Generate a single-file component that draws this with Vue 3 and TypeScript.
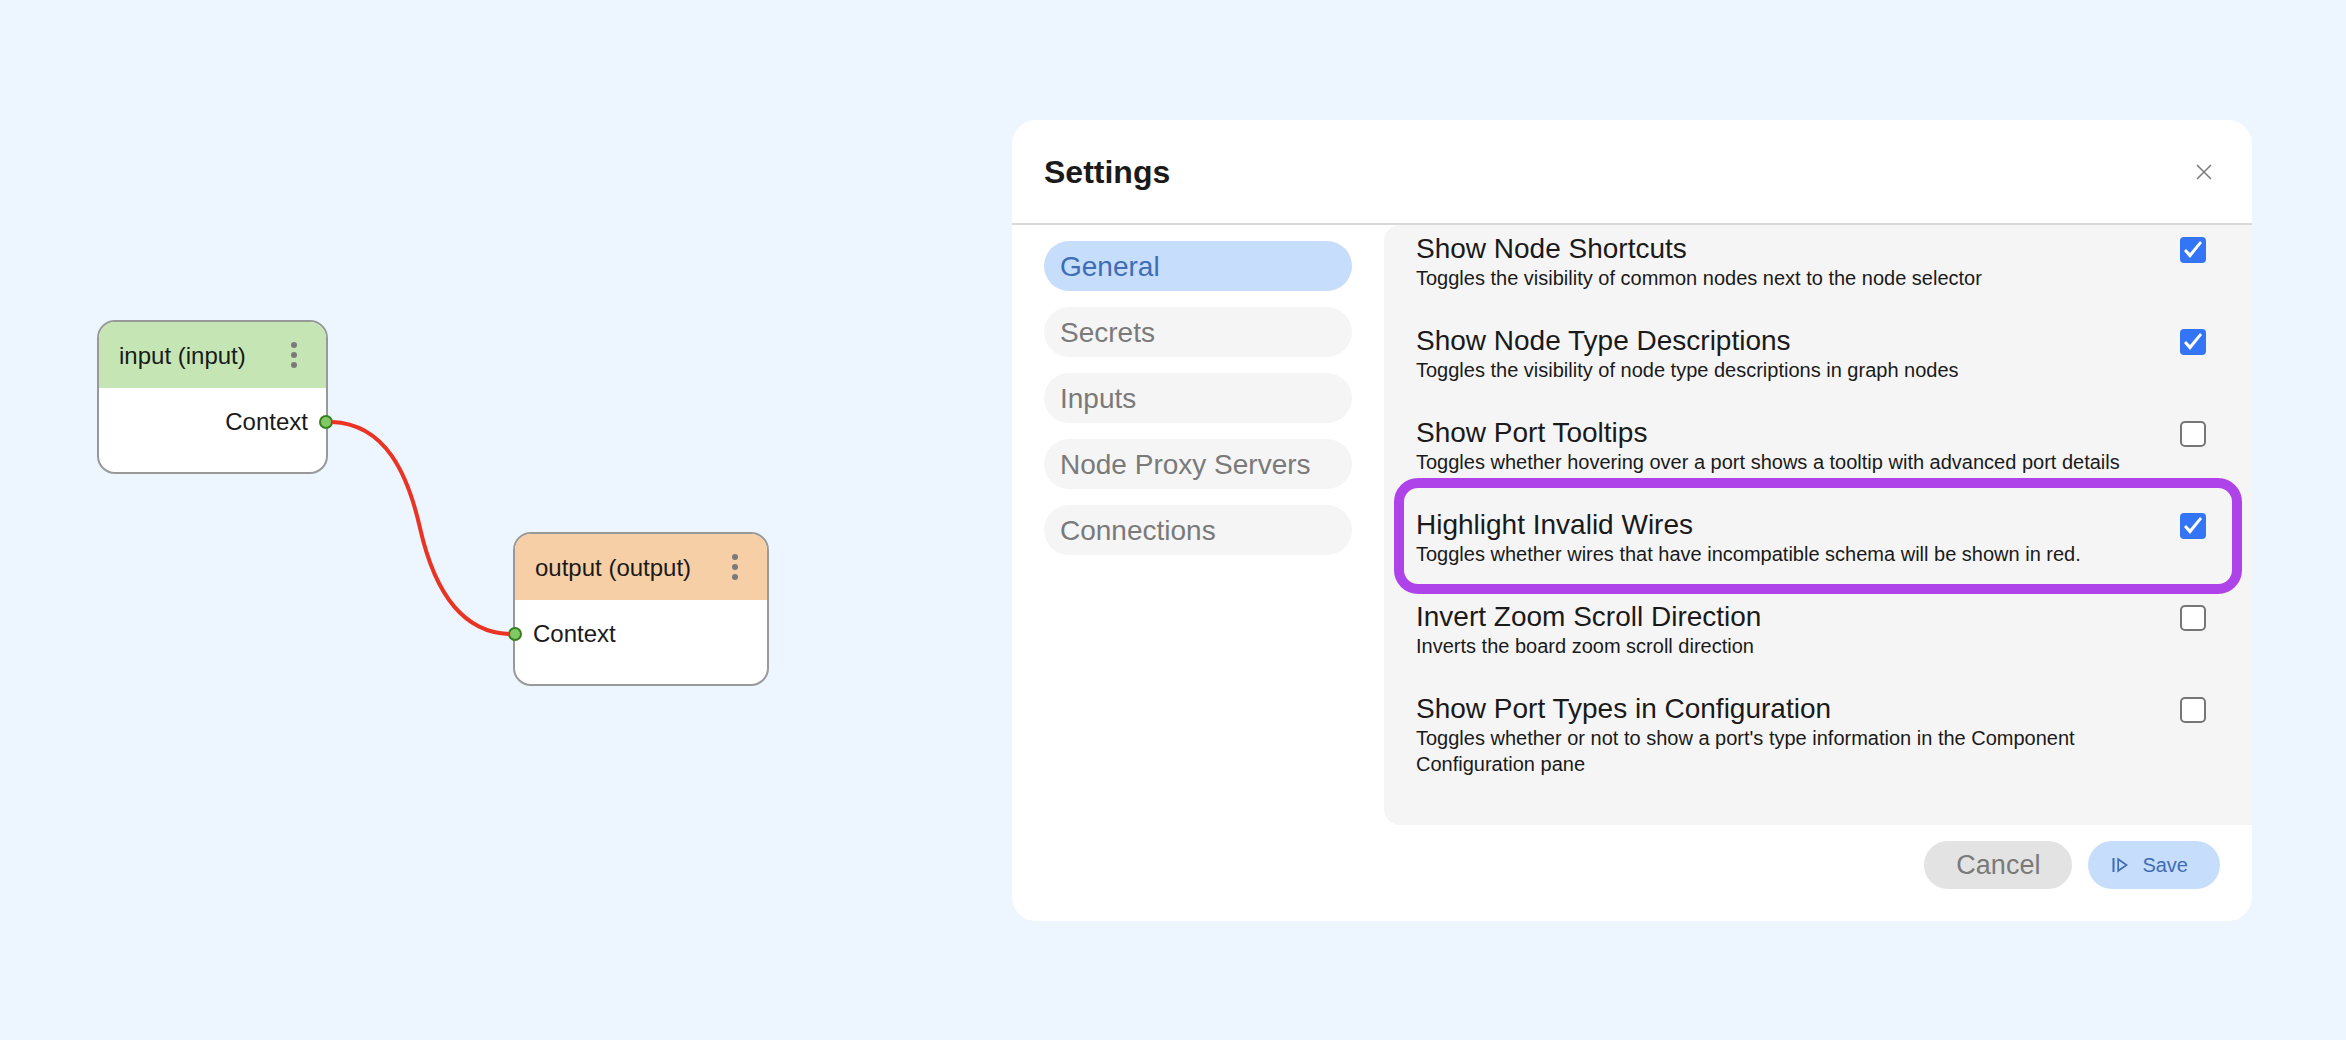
<script setup lang="ts">
import { ref } from 'vue'

interface GraphNode {
  id: string
  title: string
  kind: 'input' | 'output'
  x: number
  y: number
  width: number
}

interface Setting {
  id: string
  title: string
  description: string
  enabled: boolean
  highlighted?: boolean
}

const nodes: GraphNode[] = [
  { id: 'input', title: 'input (input)', kind: 'input', x: 97, y: 320, width: 231 },
  { id: 'output', title: 'output (output)', kind: 'output', x: 513, y: 532, width: 256 },
]

const tabs = ['General', 'Secrets', 'Inputs', 'Node Proxy Servers', 'Connections']
const activeTab = ref('General')

const settings = ref<Setting[]>([
  {
    id: 'shortcuts',
    title: 'Show Node Shortcuts',
    description: 'Toggles the visibility of common nodes next to the node selector',
    enabled: true,
  },
  {
    id: 'type-descriptions',
    title: 'Show Node Type Descriptions',
    description: 'Toggles the visibility of node type descriptions in graph nodes',
    enabled: true,
  },
  {
    id: 'port-tooltips',
    title: 'Show Port Tooltips',
    description: 'Toggles whether hovering over a port shows a tooltip with advanced port details',
    enabled: false,
  },
  {
    id: 'invalid-wires',
    title: 'Highlight Invalid Wires',
    description: 'Toggles whether wires that have incompatible schema will be shown in red.',
    enabled: true,
    highlighted: true,
  },
  {
    id: 'invert-zoom',
    title: 'Invert Zoom Scroll Direction',
    description: 'Inverts the board zoom scroll direction',
    enabled: false,
  },
  {
    id: 'port-types',
    title: 'Show Port Types in Configuration',
    description:
      "Toggles whether or not to show a port's type information in the Component Configuration pane",
    enabled: false,
  },
])
</script>

<template>
  <main class="page">
    <section class="board" aria-label="Board">
      <article
        v-for="node in nodes"
        :key="node.id"
        class="node"
        :class="node.kind"
        :style="{ left: node.x + 'px', top: node.y + 'px', width: node.width + 'px' }"
      >
        <header class="node-header">
          <span class="node-title">{{ node.title }}</span>
          <button type="button" class="node-menu" aria-label="Node menu">
            <svg width="8" height="28" viewBox="0 0 8 28" fill="#7a7a7a">
              <circle cx="4" cy="4" r="3" />
              <circle cx="4" cy="14" r="3" />
              <circle cx="4" cy="24" r="3" />
            </svg>
          </button>
        </header>
        <div class="node-port">
          <span>Context</span>
          <i class="port-dot"></i>
        </div>
      </article>
      <svg class="wire" width="190" height="216" viewBox="326 420 190 216" fill="none">
        <path
          d="M332 422C386 424 408 475 420 528S456 632 509 634"
          stroke="#ea3323"
          stroke-width="4"
        />
      </svg>
    </section>

    <section class="dialog" role="dialog" aria-labelledby="dialog-title">
      <header class="dialog-header">
        <h1 id="dialog-title">Settings</h1>
        <button type="button" class="close" aria-label="Close">
          <svg width="16" height="16" viewBox="0 0 16 16" stroke="#7a7a7a" stroke-width="1.500">
            <path d="M1 1 15 15M15 1 1 15" />
          </svg>
        </button>
      </header>

      <div class="dialog-body">
        <nav class="tabs">
          <button
            v-for="tab in tabs"
            :key="tab"
            type="button"
            class="tab"
            :class="{ active: tab === activeTab }"
            @click="activeTab = tab"
          >
            {{ tab }}
          </button>
        </nav>

        <div class="panel">
          <div
            v-for="item in settings"
            :key="item.id"
            class="setting"
            :class="{ highlighted: item.highlighted }"
          >
            <label class="setting-text" :for="item.id">
              <span class="setting-title">{{ item.title }}</span>
              <span class="setting-description">{{ item.description }}</span>
            </label>
            <input :id="item.id" v-model="item.enabled" type="checkbox" class="setting-box" />
          </div>
        </div>
      </div>

      <footer class="dialog-footer">
        <button type="button" class="action cancel">Cancel</button>
        <button type="button" class="action save">
          <svg width="16" height="16" viewBox="0 0 16 16" fill="none" stroke="#3e6db5">
            <path d="M1.500 1V15" stroke-width="2" />
            <path d="M6.200 2.200V13.800L14.600 8Z" stroke-width="1.700" />
          </svg>
          <span>Save</span>
        </button>
      </footer>
    </section>
  </main>
</template>

<style>
body {
  background: #edf5ff;
}
</style>

<style scoped>
.page {
  display: flex;
  align-items: flex-start;
  box-sizing: border-box;
  min-height: 100vh;
  background: #edf5ff;
  color: #1a1a1a;
  font-family: "Liberation Sans", Arial, sans-serif;
}

button {
  border: 0;
  padding: 0;
  background: none;
  font-family: inherit;
  cursor: pointer;
}

svg {
  display: block;
}

/* Board with freely placed nodes */
.board {
  position: relative;
  flex: 1 0 780px;
  align-self: stretch;
}

.node {
  position: absolute;
  box-sizing: border-box;
  border: 2px solid #999;
  border-radius: 18px;
  background: #fff;
  font-size: 24px;
  line-height: 28px;
}

.node-header {
  display: flex;
  align-items: center;
  justify-content: space-between;
  height: 66px;
  padding: 0 28px 0 20px;
  border-radius: 16px 16px 0 0;
}

.node-title {
  padding-top: 2px;
}

.input .node-header {
  background: #c5e6b4;
}

.output .node-header {
  background: #f7cfa6;
}

.node-port {
  position: relative;
  display: flex;
  padding: 20px 18px 36px;
}

.input .node-port {
  justify-content: flex-end;
}

.port-dot {
  position: absolute;
  top: 27px;
  box-sizing: border-box;
  width: 14px;
  height: 14px;
  border: 2px solid #36801f;
  border-radius: 50%;
  background: #82c864;
}

.input .port-dot {
  right: -7px;
}

.output .port-dot {
  left: -7px;
}

.wire {
  position: absolute;
  left: 326px;
  top: 420px;
}

/* Settings dialog */
.dialog {
  flex: 0 1 1240px;
  margin: 120px 94px 119px 0;
  border-radius: 24px;
  background: #fff;
  overflow: hidden;
}

.dialog-header {
  display: flex;
  align-items: center;
  justify-content: space-between;
  padding: 32px 40px 31px 32px;
  border-bottom: 2px solid #d9d9d9;
}

h1 {
  margin: 0;
  font-size: 32px;
  line-height: 40px;
}

.dialog-body {
  display: flex;
  gap: 32px;
  padding-left: 32px;
}

.tabs {
  display: flex;
  flex: 0 0 308px;
  flex-direction: column;
  gap: 16px;
  padding-top: 16px;
}

.tab {
  padding: 2px 16px 0;
  border-radius: 25px;
  background: #f5f5f5;
  color: #7a7a7a;
  font-size: 28px;
  line-height: 48px;
  text-align: left;
}

.tab.active {
  background: #c7ddfc;
  color: #3e6db5;
}

.panel {
  display: flex;
  flex: 1;
  flex-direction: column;
  gap: 32px;
  padding: 6px 46px 48px 32px;
  border-radius: 16px 0 0 16px;
  background: #f5f5f5;
}

.setting {
  position: relative;
  display: flex;
  align-items: flex-start;
  justify-content: space-between;
  gap: 32px;
}

/* Callout frame drawn over the gaps around the row */
.setting.highlighted::after {
  position: absolute;
  inset: -29px -36px -27px -22px;
  border: 10px solid #af43ea;
  border-radius: 24px;
  content: "";
  pointer-events: none;
}

.setting-title,
.setting-description {
  display: block;
}

.setting-title {
  padding-top: 2px;
  font-size: 28px;
  line-height: 32px;
}

.setting-description {
  font-size: 20px;
  line-height: 26px;
}

.setting-box {
  flex: none;
  box-sizing: border-box;
  width: 26px;
  height: 26px;
  margin: 6px 0 0;
  border: 2px solid #767676;
  border-radius: 5px;
  background: #fff;
  appearance: none;
}

.setting-box:checked {
  border: 0;
  border-radius: 4px;
  background: #3375f6;
}

.setting-box:checked::before {
  display: block;
  width: 26px;
  height: 26px;
  background: #fff;
  clip-path: polygon(4px 14px, 6px 12px, 10px 16px, 20px 4px, 22px 6px, 10px 21px);
  content: "";
}

.dialog-footer {
  display: flex;
  justify-content: flex-end;
  gap: 16px;
  padding: 16px 32px 32px;
}

.action {
  display: flex;
  align-items: center;
  height: 48px;
  border-radius: 24px;
}

.cancel {
  padding: 0 32px;
  background: #e3e3e3;
  color: #7a7a7a;
  font-size: 27px;
}

.save {
  gap: 14px;
  padding: 0 32px 0 24px;
  background: #c7ddfc;
  color: #3e6db5;
  font-size: 20px;
}
</style>
